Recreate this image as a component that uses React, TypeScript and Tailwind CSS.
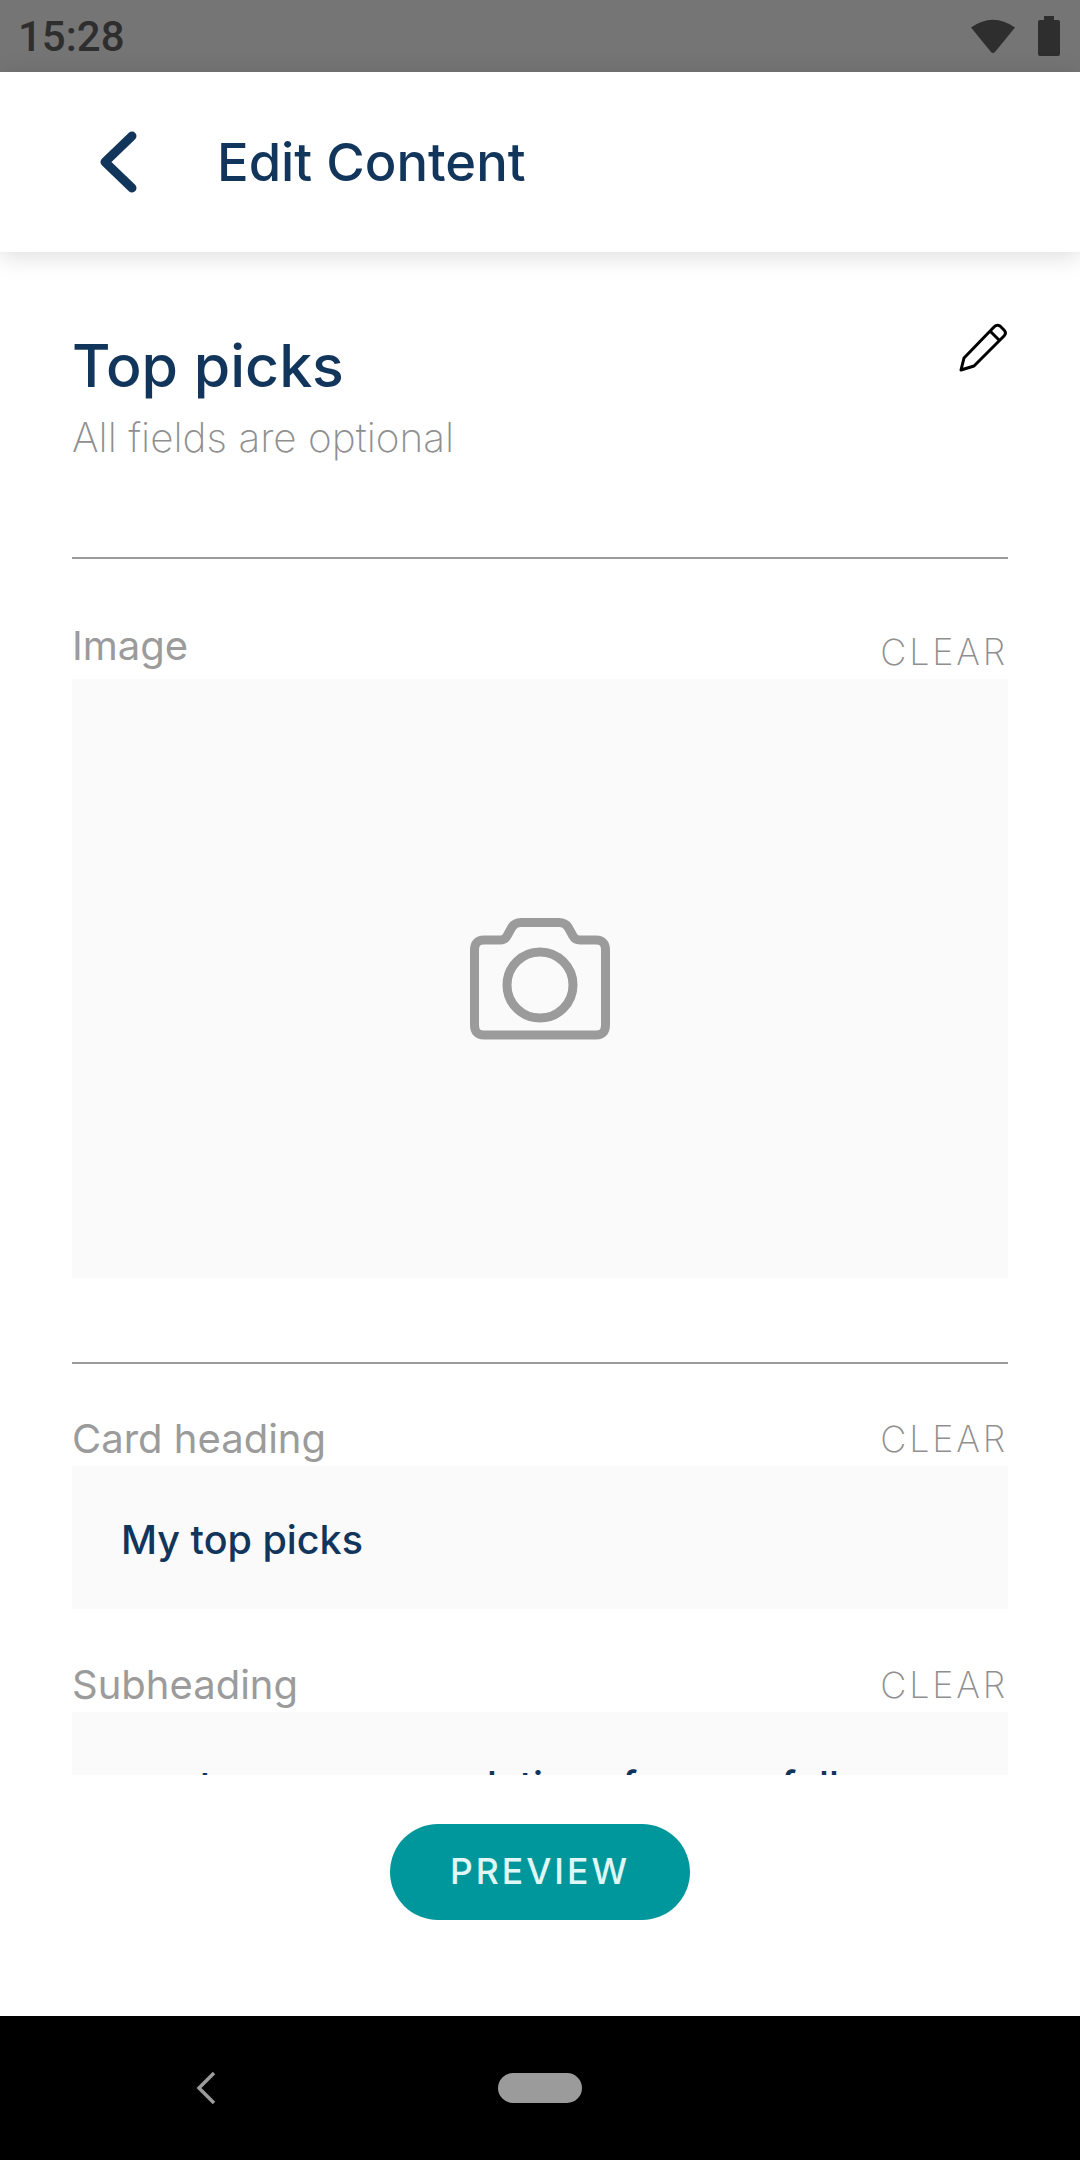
import React from 'react';

const font = "font-['Inter','Liberation_Sans',sans-serif]";

function FieldHeader({ label, labelClass = 'mb-[2px]' }: { label: string; labelClass?: string }) {
  return (
    <div className="flex items-end justify-between h-[52px]">
      <span className={`text-[40px] leading-[50px] text-[#9b9b9b] ${labelClass}`}>{label}</span>
      <span className="text-[36px] leading-[50px] mb-[2px] font-extralight tracking-[2.8px] text-[#8f8f8f]">CLEAR</span>
    </div>
  );
}

function TextField({ label, value, className }: { label: string; value: string; className: string }) {
  return (
    <div className={className}>
      <FieldHeader label={label} />
      <div className="h-[143px] bg-[#fafafa] px-[49px] pt-[49px]">
        <span className="block text-[39.500px] leading-[50px] font-medium text-[#12355b] whitespace-nowrap">{value}</span>
      </div>
    </div>
  );
}

export default function App() {
  return (
    <div className={`${font} flex flex-col w-[1080px] h-[2160px] bg-white overflow-hidden`}>
      {/* status bar */}
      <div className="h-[72px] shrink-0 bg-[#757575] flex items-center justify-between pl-[18px] pr-[20px]">
        <span className="font-['Roboto',sans-serif] text-[42px] leading-[50px] pt-[2px] font-medium text-[#2e2e2e]">15:28</span>
        <div className="flex items-center gap-[22px]">
          <svg width="46" height="36" viewBox="0 0 46 36" fill="#2e2e2e">
            <path d="M1 9.500 Q23 -6 45 9.500 L25 34 Q23 36 21 34 Z" />
          </svg>
          <svg width="22" height="40" viewBox="0 0 22 40" fill="#2e2e2e">
            <path d="M6 0h10v4h4a2 2 0 0 1 2 2v32a2 2 0 0 1-2 2H2a2 2 0 0 1-2-2V6a2 2 0 0 1 2-2h4z" />
          </svg>
        </div>
      </div>

      {/* header */}
      <div className="relative z-10 h-[180px] shrink-0 bg-white shadow-[0_4px_24px_rgba(0,0,0,0.14)] flex items-center pl-[100px]">
        <svg width="38" height="62" viewBox="0 0 38 62" fill="none" stroke="#12355b" strokeWidth="9" strokeLinecap="round" strokeLinejoin="round">
          <path d="M32 5 L5 31 L32 57" />
        </svg>
        <span className="ml-[79px] pt-[1px] text-[52.500px] font-medium text-[#12355b]">Edit Content</span>
      </div>

      {/* scrollable form */}
      <div className="flex-1 min-h-0 overflow-hidden px-[72px]">
        <div className="flex justify-between pt-[74px]">
          <div>
            <div className="text-[59px] leading-[80px] font-medium text-[#12355b]">Top picks</div>
            <div className="text-[40.500px] leading-[50px] font-extralight text-[#8f8f8f] mt-[7px]">All fields are optional</div>
          </div>
          <svg className="mt-[-3px]" width="50" height="50" viewBox="0 0 50 50" fill="none" stroke="#000" strokeWidth="3" strokeLinejoin="round">
            <path d="M3 47 L6 35 L36 4 Q39 1 42 3 L46 7 Q49 10 46 13 L16 43 Z" />
            <path d="M32 8 L42 18" />
          </svg>
        </div>
        <div className="h-[2px] bg-[#9b9b9b] mt-[94px]" />

        <div className="mt-[68px]">
          <FieldHeader label="Image" labelClass="mb-[8px]" />
          <div className="h-[599px] bg-[#fafafa] flex items-center justify-center">
            <svg width="140" height="122" viewBox="0 0 140 122" fill="none" stroke="#9b9b9b" strokeWidth="9" strokeLinejoin="round">
              <path d="M14 22 H30 Q35 22 37 18 L42 9 Q45 4.500 51 4.500 H89 Q95 4.500 98 9 L103 18 Q105 22 110 22 H126 Q135.500 22 135.500 32 V107 Q135.500 117 126 117 H14 Q4.500 117 4.500 107 V32 Q4.500 22 14 22 Z" />
              <circle cx="70" cy="67" r="33" />
            </svg>
          </div>
        </div>

        <div className="h-[2px] bg-[#9b9b9b] mt-[84px]" />

        <TextField className="mt-[50px]" label="Card heading" value="My top picks" />
        <TextField className="mt-[51px]" label="Subheading" value="see top recommendations for your followers" />
      </div>

      {/* footer */}
      <div className="h-[241px] shrink-0 bg-white flex justify-center pt-[49px]">
        <button className="w-[300px] h-[96px] rounded-full bg-[#00979c] text-[35.500px] font-medium tracking-[3px] text-[#e0f7f7]">PREVIEW</button>
      </div>

      {/* nav bar */}
      <div className="h-[144px] shrink-0 bg-black flex items-center justify-center">
        <svg className="mr-[282px]" width="20" height="32" viewBox="0 0 20 32" fill="none" stroke="#9b9b9b" strokeWidth="3.500">
          <path d="M18 1 L3 16 L18 31" />
        </svg>
        <div className="w-[84px] h-[30px] rounded-full bg-[#9b9b9b] mr-[302px]" />
      </div>
    </div>
  );
}
